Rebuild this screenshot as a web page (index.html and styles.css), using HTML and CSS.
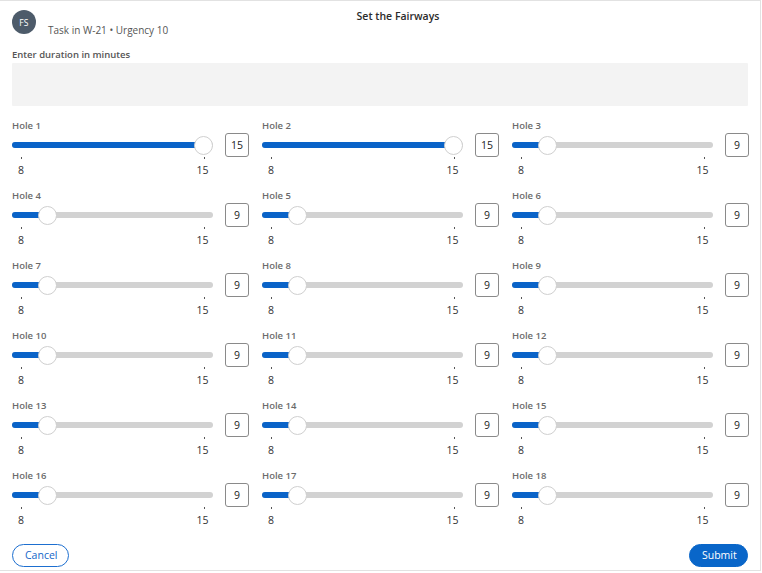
FILE: index.html
```html
<!DOCTYPE html>
<html>
<head>
<meta charset="utf-8">
<link rel="stylesheet" href="styles.css">
</head>
<body>
<div class="frame">
  <header class="header">
    <div class="avatar">FS</div>
    <div class="head-text">
      <div class="title">Set the Fairways</div>
      <div class="subtitle">Task in W-21 • Urgency 10</div>
    </div>
  </header>

  <div class="field-label">Enter duration in minutes</div>
  <div class="field-box"></div>

  <div class="grid">
    <div class="cell"><div class="label">Hole 1</div><div class="body"><div class="slider"><div class="track" style="--p:1"><div class="fill"></div><div class="thumb"></div></div><div class="ticks"><div class="tick"><span class="mark"></span><span>8</span></div><div class="tick"><span class="mark"></span><span>15</span></div></div></div><div class="value">15</div></div></div>
    <div class="cell"><div class="label">Hole 2</div><div class="body"><div class="slider"><div class="track" style="--p:1"><div class="fill"></div><div class="thumb"></div></div><div class="ticks"><div class="tick"><span class="mark"></span><span>8</span></div><div class="tick"><span class="mark"></span><span>15</span></div></div></div><div class="value">15</div></div></div>
    <div class="cell"><div class="label">Hole 3</div><div class="body"><div class="slider"><div class="track" style="--p:0.142857"><div class="fill"></div><div class="thumb"></div></div><div class="ticks"><div class="tick"><span class="mark"></span><span>8</span></div><div class="tick"><span class="mark"></span><span>15</span></div></div></div><div class="value">9</div></div></div>

    <div class="cell"><div class="label">Hole 4</div><div class="body"><div class="slider"><div class="track" style="--p:0.142857"><div class="fill"></div><div class="thumb"></div></div><div class="ticks"><div class="tick"><span class="mark"></span><span>8</span></div><div class="tick"><span class="mark"></span><span>15</span></div></div></div><div class="value">9</div></div></div>
    <div class="cell"><div class="label">Hole 5</div><div class="body"><div class="slider"><div class="track" style="--p:0.142857"><div class="fill"></div><div class="thumb"></div></div><div class="ticks"><div class="tick"><span class="mark"></span><span>8</span></div><div class="tick"><span class="mark"></span><span>15</span></div></div></div><div class="value">9</div></div></div>
    <div class="cell"><div class="label">Hole 6</div><div class="body"><div class="slider"><div class="track" style="--p:0.142857"><div class="fill"></div><div class="thumb"></div></div><div class="ticks"><div class="tick"><span class="mark"></span><span>8</span></div><div class="tick"><span class="mark"></span><span>15</span></div></div></div><div class="value">9</div></div></div>

    <div class="cell"><div class="label">Hole 7</div><div class="body"><div class="slider"><div class="track" style="--p:0.142857"><div class="fill"></div><div class="thumb"></div></div><div class="ticks"><div class="tick"><span class="mark"></span><span>8</span></div><div class="tick"><span class="mark"></span><span>15</span></div></div></div><div class="value">9</div></div></div>
    <div class="cell"><div class="label">Hole 8</div><div class="body"><div class="slider"><div class="track" style="--p:0.142857"><div class="fill"></div><div class="thumb"></div></div><div class="ticks"><div class="tick"><span class="mark"></span><span>8</span></div><div class="tick"><span class="mark"></span><span>15</span></div></div></div><div class="value">9</div></div></div>
    <div class="cell"><div class="label">Hole 9</div><div class="body"><div class="slider"><div class="track" style="--p:0.142857"><div class="fill"></div><div class="thumb"></div></div><div class="ticks"><div class="tick"><span class="mark"></span><span>8</span></div><div class="tick"><span class="mark"></span><span>15</span></div></div></div><div class="value">9</div></div></div>

    <div class="cell"><div class="label">Hole 10</div><div class="body"><div class="slider"><div class="track" style="--p:0.142857"><div class="fill"></div><div class="thumb"></div></div><div class="ticks"><div class="tick"><span class="mark"></span><span>8</span></div><div class="tick"><span class="mark"></span><span>15</span></div></div></div><div class="value">9</div></div></div>
    <div class="cell"><div class="label">Hole 11</div><div class="body"><div class="slider"><div class="track" style="--p:0.142857"><div class="fill"></div><div class="thumb"></div></div><div class="ticks"><div class="tick"><span class="mark"></span><span>8</span></div><div class="tick"><span class="mark"></span><span>15</span></div></div></div><div class="value">9</div></div></div>
    <div class="cell"><div class="label">Hole 12</div><div class="body"><div class="slider"><div class="track" style="--p:0.142857"><div class="fill"></div><div class="thumb"></div></div><div class="ticks"><div class="tick"><span class="mark"></span><span>8</span></div><div class="tick"><span class="mark"></span><span>15</span></div></div></div><div class="value">9</div></div></div>

    <div class="cell"><div class="label">Hole 13</div><div class="body"><div class="slider"><div class="track" style="--p:0.142857"><div class="fill"></div><div class="thumb"></div></div><div class="ticks"><div class="tick"><span class="mark"></span><span>8</span></div><div class="tick"><span class="mark"></span><span>15</span></div></div></div><div class="value">9</div></div></div>
    <div class="cell"><div class="label">Hole 14</div><div class="body"><div class="slider"><div class="track" style="--p:0.142857"><div class="fill"></div><div class="thumb"></div></div><div class="ticks"><div class="tick"><span class="mark"></span><span>8</span></div><div class="tick"><span class="mark"></span><span>15</span></div></div></div><div class="value">9</div></div></div>
    <div class="cell"><div class="label">Hole 15</div><div class="body"><div class="slider"><div class="track" style="--p:0.142857"><div class="fill"></div><div class="thumb"></div></div><div class="ticks"><div class="tick"><span class="mark"></span><span>8</span></div><div class="tick"><span class="mark"></span><span>15</span></div></div></div><div class="value">9</div></div></div>

    <div class="cell"><div class="label">Hole 16</div><div class="body"><div class="slider"><div class="track" style="--p:0.142857"><div class="fill"></div><div class="thumb"></div></div><div class="ticks"><div class="tick"><span class="mark"></span><span>8</span></div><div class="tick"><span class="mark"></span><span>15</span></div></div></div><div class="value">9</div></div></div>
    <div class="cell"><div class="label">Hole 17</div><div class="body"><div class="slider"><div class="track" style="--p:0.142857"><div class="fill"></div><div class="thumb"></div></div><div class="ticks"><div class="tick"><span class="mark"></span><span>8</span></div><div class="tick"><span class="mark"></span><span>15</span></div></div></div><div class="value">9</div></div></div>
    <div class="cell"><div class="label">Hole 18</div><div class="body"><div class="slider"><div class="track" style="--p:0.142857"><div class="fill"></div><div class="thumb"></div></div><div class="ticks"><div class="tick"><span class="mark"></span><span>8</span></div><div class="tick"><span class="mark"></span><span>15</span></div></div></div><div class="value">9</div></div></div>
  </div>

  <footer class="footer">
    <button class="btn btn-outline">Cancel</button>
    <button class="btn btn-primary">Submit</button>
  </footer>
</div>
</body>
</html>
```

FILE: styles.css
```css
* { box-sizing: border-box; }

html, body {
  margin: 0;
  padding: 0;
  background: #ffffff;
}

body {
  font-family: "Open Sans", "Noto Sans", "Liberation Sans", sans-serif;
  color: #333333;
}

.frame {
  width: 761px;
  height: 571px;
  border: 1px solid #e2e2e2;
  border-left: none;
  padding: 0 12px 0 12px;
  background: #ffffff;
}

.header {
  display: flex;
  align-items: flex-start;
  gap: 12px;
  padding-top: 9px;
  height: 33px;
}

.avatar {
  flex: none;
  width: 24px;
  height: 24px;
  border-radius: 50%;
  background: #4d5b6a;
  color: #ffffff;
  font-size: 8.5px;
  font-weight: 400;
  display: flex;
  align-items: center;
  justify-content: center;
  letter-spacing: 0.2px;
}

.head-text {
  flex: 1;
  min-width: 0;
  margin-top: -1px;
}

.title {
  text-align: center;
  font-size: 10.5px;
  line-height: 14px;
  font-weight: 600;
  color: #2b2b2b;
}

.subtitle {
  font-size: 10px;
  line-height: 14px;
  color: #555555;
  white-space: nowrap;
}

.field-label {
  margin-top: 14px;
  font-size: 9.5px;
  line-height: 14px;
  font-weight: 600;
  color: #555555;
}

.field-box {
  margin-top: 1px;
  height: 43px;
  background: #f3f3f3;
  border-radius: 1px;
}

.grid {
  margin-top: 13px;
  display: grid;
  grid-template-columns: repeat(3, 237px);
  column-gap: 13px;
  row-gap: 14px;
}

.cell {
  height: 56px;
}

.label {
  font-size: 9.5px;
  line-height: 14px;
  font-weight: 600;
  color: #6b6b6b;
}

.body {
  display: flex;
  align-items: flex-start;
  gap: 12px;
}

.slider {
  width: 201px;
}

.track {
  position: relative;
  height: 24px;
}

.track::before {
  content: "";
  position: absolute;
  left: 0;
  right: 0;
  top: 9px;
  height: 6px;
  border-radius: 3px;
  background: #d2d2d2;
}

.fill {
  position: absolute;
  left: 0;
  top: 9px;
  height: 6px;
  border-radius: 3px;
  background: #0a63c8;
  width: calc(9px + var(--p) * (100% - 18px));
}

.thumb {
  position: absolute;
  top: 2.5px;
  left: calc(var(--p) * (100% - 19px));
  width: 19px;
  height: 19px;
  border-radius: 50%;
  background: #ffffff;
  border: 1px solid #cfcfcf;
}

.ticks {
  display: flex;
  justify-content: space-between;
  padding: 0 1px 0 1px;
}

.tick {
  display: flex;
  flex-direction: column;
  align-items: center;
  width: 16px;
  font-size: 10.5px;
  line-height: 14px;
  color: #333333;
}

.tick:last-child span:last-child {
  margin-right: 3px;
}

.mark {
  display: block;
  width: 1px;
  height: 2px;
  background: #555555;
  margin-bottom: 4px;
}

.value {
  width: 24px;
  height: 24px;
  border: 1px solid #8a8a8a;
  border-radius: 3px;
  display: flex;
  align-items: center;
  justify-content: center;
  font-size: 10.5px;
  color: #222222;
}

.footer {
  margin-top: 19px;
  display: flex;
  justify-content: space-between;
  align-items: center;
}

.btn {
  font-family: inherit;
  height: 23px;
  border-radius: 12px;
  font-size: 10.5px;
  line-height: 1;
  padding: 0 12px;
  cursor: pointer;
}

.btn-outline {
  width: 57px;
  background: #ffffff;
  color: #1466c8;
  border: 1px solid #1d6fd0;
}

.btn-primary {
  width: 59px;
  background: #0966c9;
  color: #ffffff;
  border: 1px solid #0966c9;
}
```
